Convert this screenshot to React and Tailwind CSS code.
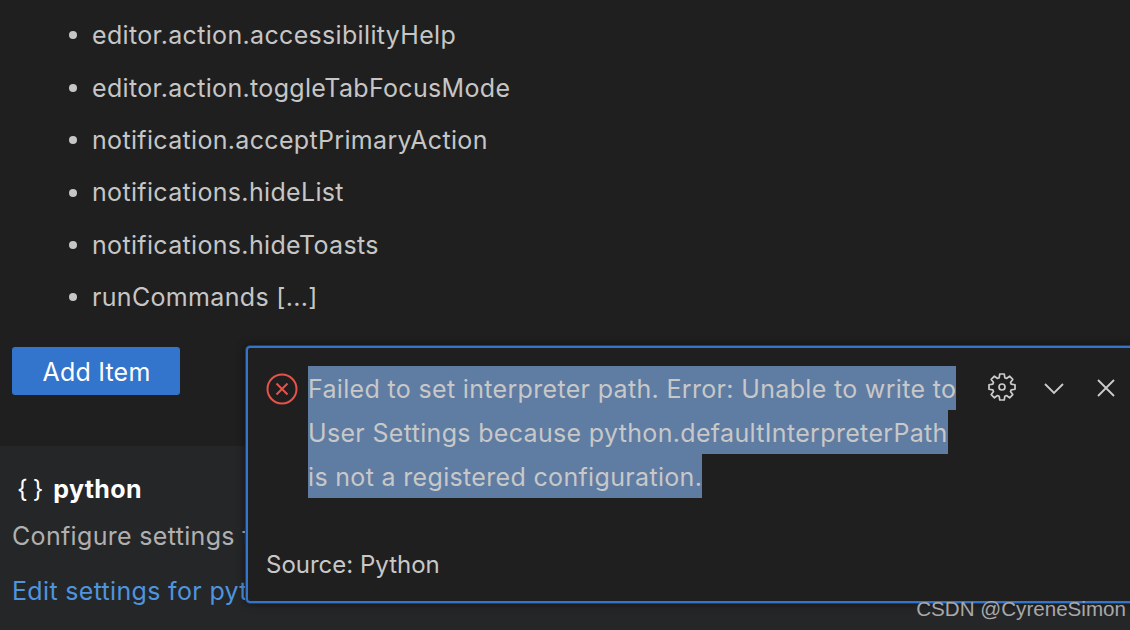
import React from 'react';

const items = [
  'editor.action.accessibilityHelp',
  'editor.action.toggleTabFocusMode',
  'notification.acceptPrimaryAction',
  'notifications.hideList',
  'notifications.hideToasts',
  'runCommands [...]',
];

const lines = [
  'Failed to set interpreter path. Error: Unable to write to',
  'User Settings because python.defaultInterpreterPath',
  'is not a registered configuration.',
];

// 8 tooth gear outline, like the codicon settings gear
const gearPath = () => {
  const pts = [];
  for (let i = 0; i < 8; i++) {
    const a = (i * Math.PI) / 4 - Math.PI / 2;
    [[-0.3, 9.6], [-0.17, 13.2], [0.17, 13.2], [0.3, 9.6]].forEach(([d, r]) => {
      pts.push(`${(14 + r * Math.cos(a + d)).toFixed(2)} ${(14 + r * Math.sin(a + d)).toFixed(2)}`);
    });
  }
  return `M${pts.join('L')}Z`;
};

const App = () => {
  return (
    <div className="relative h-[630px] w-[1130px] overflow-hidden bg-[#1f1f1f] font-['Inter',sans-serif] text-[25px] tracking-[0.33px] text-[#c6c6c6]">
      {/* Settings list */}
      <div className="h-[446px] pl-[12px]">
        <ul className="pl-[57px] pt-[9.2px]">
          {items.map((item) => (
            <li key={item} className="flex h-[52.4px] items-center">
              <span className="mr-[15px] h-[8px] w-[8px] rounded-full bg-[#c6c6c6]" />
              <span className="pt-[1px]">{item}</span>
            </li>
          ))}
        </ul>
        <button className="mt-[23.4px] flex h-[48px] w-[168px] items-center justify-center rounded-[3px] bg-[#3374cc] pl-[1px] pt-[3px] tracking-[0.2px] text-white">
          Add Item
        </button>
      </div>

      {/* Next setting */}
      <div className="h-[184px] bg-[#252628] pl-[12px] pt-[25px]">
        <div className="flex items-center gap-[5px] font-bold text-white">
          <span className="pl-[5px] font-normal tracking-[5px]">{'{}'}</span>
          <span>python</span>
        </div>
        <div className="mt-[9px] text-[#b0b0b0]">Configure settings for Python</div>
        <div className="mt-[18px] text-[#4f94de]">Edit settings for python</div>
      </div>

      {/* Notification toast */}
      <div className="absolute left-[245px] top-[345px] h-[259px] w-[900px] rounded-[5px] border-[1px] border-[#3a3a3a] shadow-[0_0_10px_rgba(0,0,0,0.45)]">
        <div className="flex h-full rounded-[4px] border-2 border-[#3374cc] bg-[#1f1f1f]">
          <div className="pl-[18px] pt-[25px]">
            <svg width="32" height="32" viewBox="0 0 32 32" fill="none" stroke="#e5534b" strokeWidth="2">
              <circle cx="16" cy="16" r="14.5" />
              <path d="M10.5 10.5 21.5 21.5M21.5 10.5 10.5 21.5" />
            </svg>
          </div>
          <div className="flex-1 pl-[10px] pt-[18px]">
            {lines.map((line) => (
              <div key={line} className="h-[44px]">
                <span className="inline-block h-[44px] bg-[#5f7ca3] leading-[46px] text-[#c8c8c8]">{line}</span>
              </div>
            ))}
          </div>
          <svg className="absolute left-[742px] top-[27px]" width="28" height="28" viewBox="0 0 28 28" fill="none" stroke="#cccccc" strokeWidth="1.7" strokeLinejoin="round">
            <path d={gearPath()} />
            <circle cx="14" cy="14" r="3" />
          </svg>
          <svg className="absolute left-[796px] top-[33px]" width="24" height="20" viewBox="0 0 24 20" fill="none" stroke="#cccccc" strokeWidth="1.8">
            <path d="M3 5l9 9 9-9" />
          </svg>
          <svg className="absolute left-[849px] top-[31px]" width="22" height="22" viewBox="0 0 22 22" fill="none" stroke="#cccccc" strokeWidth="1.8">
            <path d="M3 3l16 16M19 3 3 19" />
          </svg>
          <div className="absolute left-[20px] top-[201px] text-[24px] tracking-normal text-[#c8c8c8]">Source: Python</div>
        </div>
      </div>

      {/* Watermark */}
      <div className="absolute right-[4px] top-[596px] font-['Liberation_Sans',sans-serif] text-[20.6px] leading-[26px] tracking-normal text-[#a8a8a8]">
        CSDN @CyreneSimon
      </div>
    </div>
  );
};

export default App;
